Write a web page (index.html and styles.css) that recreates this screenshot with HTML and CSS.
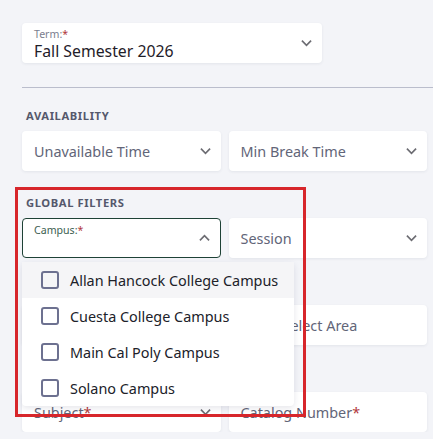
FILE: index.html
```html
<!DOCTYPE html>
<html>
<head>
  <link rel="stylesheet" href="styles.css">
</head>
<body>
  <div id="page">
    <div class="field term">
      <div class="field-text">
        <div class="field-label">Term:<span class="req">*</span></div>
        <div class="field-value">Fall Semester 2026</div>
      </div>
      <svg class="chev" viewBox="0 0 12 8"><path d="M1 1.5l5 5 5-5"/></svg>
    </div>

    <hr class="divider">

    <div class="section-title">Availability</div>
    <div class="row">
      <div class="field">
        <div class="placeholder">Unavailable Time</div>
        <svg class="chev" viewBox="0 0 12 8"><path d="M1 1.5l5 5 5-5"/></svg>
      </div>
      <div class="field">
        <div class="placeholder">Min Break Time</div>
        <svg class="chev" viewBox="0 0 12 8"><path d="M1 1.5l5 5 5-5"/></svg>
      </div>
    </div>

    <div class="section-title">Global Filters</div>
    <div class="grid">
      <div class="campus-wrap">
        <div class="field open">
          <div class="field-text">
            <div class="field-label green">Campus:<span class="req">*</span></div>
          </div>
          <svg class="chev" viewBox="0 0 12 8"><path d="M1 6.5l5-5 5 5"/></svg>
        </div>
        <!-- open campus menu -->
        <div class="menu">
          <div class="menu-item active"><span class="box"></span>Allan Hancock College Campus</div>
          <div class="menu-item"><span class="box"></span>Cuesta College Campus</div>
          <div class="menu-item"><span class="box"></span>Main Cal Poly Campus</div>
          <div class="menu-item"><span class="box"></span>Solano Campus</div>
        </div>
      </div>
      <div class="field">
        <div class="placeholder">Session</div>
        <svg class="chev" viewBox="0 0 12 8"><path d="M1 1.5l5 5 5-5"/></svg>
      </div>
      <div class="field">
        <div class="placeholder">Select Department</div>
        <svg class="chev" viewBox="0 0 12 8"><path d="M1 1.5l5 5 5-5"/></svg>
      </div>
      <div class="field area">
        <div class="placeholder">Select Area</div>
      </div>
      <div class="field">
        <div class="placeholder">Subject<span class="req">*</span></div>
        <svg class="chev" viewBox="0 0 12 8"><path d="M1 1.5l5 5 5-5"/></svg>
      </div>
      <div class="field">
        <div class="placeholder">Catalog Number<span class="req">*</span></div>
      </div>
    </div>
  </div>

  <!-- highlight box drawn over the filters -->
  <div class="highlight"></div>
</body>
</html>
```

FILE: styles.css
```css
* {
  margin: 0;
  padding: 0;
  box-sizing: border-box;
}

body {
  background-color: #f3f4f8;
  font-family: "Noto Sans", sans-serif;
  color: #24252d;
  overflow: hidden;
}

#page {
  padding: 23px 0 0 22px;
}

.field {
  height: 40px;
  background-color: white;
  border-radius: 4px;
  box-shadow: 0 1px 3px rgba(40, 45, 80, 0.08);
  display: flex;
  align-items: center;
  justify-content: space-between;
  padding: 0 10px 0 12px;
}

.term {
  width: 300px;
}

.field-text {
  align-self: stretch;
  padding-top: 4px;
}

.field-label {
  font-size: 10.6px;
  line-height: 14px;
  color: #7b7e8e;
}

.field-label.green {
  color: #3c5e50;
}

.req {
  color: #b2383b;
}

.field-value {
  font-size: 15.8px;
  line-height: 20px;
  color: #1f2029;
}

.placeholder {
  font-size: 14.4px;
  color: #626578;
}

.area {
  padding-left: 54px;
}

.chev {
  width: 11px;
  height: 8px;
  fill: none;
  stroke: #6c6c72;
  stroke-width: 1.8;
  flex-shrink: 0;
}

.divider {
  border: none;
  border-top: 1px solid #babdcc;
  margin-top: 24px;
}

.section-title {
  font-size: 11.2px;
  font-weight: bold;
  line-height: 14px;
  letter-spacing: 0.6px;
  text-transform: uppercase;
  color: #55586c;
  margin: 21px 0 8px 4px;
}

.row + .section-title {
  margin-top: 25px;
}

.row,
.grid {
  width: 405px;
  display: grid;
  grid-template-columns: 1fr 1fr;
  column-gap: 8px;
  row-gap: 47px;
}

.campus-wrap {
  position: relative;
}

.field.open {
  border: 1px solid #1e4236;
  box-shadow: none;
  padding-left: 11px;
}

.menu {
  position: absolute;
  top: 44px;
  left: 0;
  width: 272px;
  background-color: white;
  border-radius: 4px;
  box-shadow: 0 2px 6px rgba(40, 45, 80, 0.12);
  z-index: 5;
}

.menu-item {
  height: 36px;
  display: flex;
  align-items: center;
  gap: 11px;
  padding-left: 19px;
  font-size: 14.4px;
  color: #202129;
}

.menu-item.active {
  background-color: #f5f5f7;
}

.box {
  width: 18px;
  height: 18px;
  border: 2px solid #6d7190;
  border-radius: 3px;
}

.highlight {
  position: absolute;
  left: 15px;
  top: 187px;
  width: 291px;
  height: 230px;
  border: 3px solid #d7262b;
  z-index: 10;
}
```
